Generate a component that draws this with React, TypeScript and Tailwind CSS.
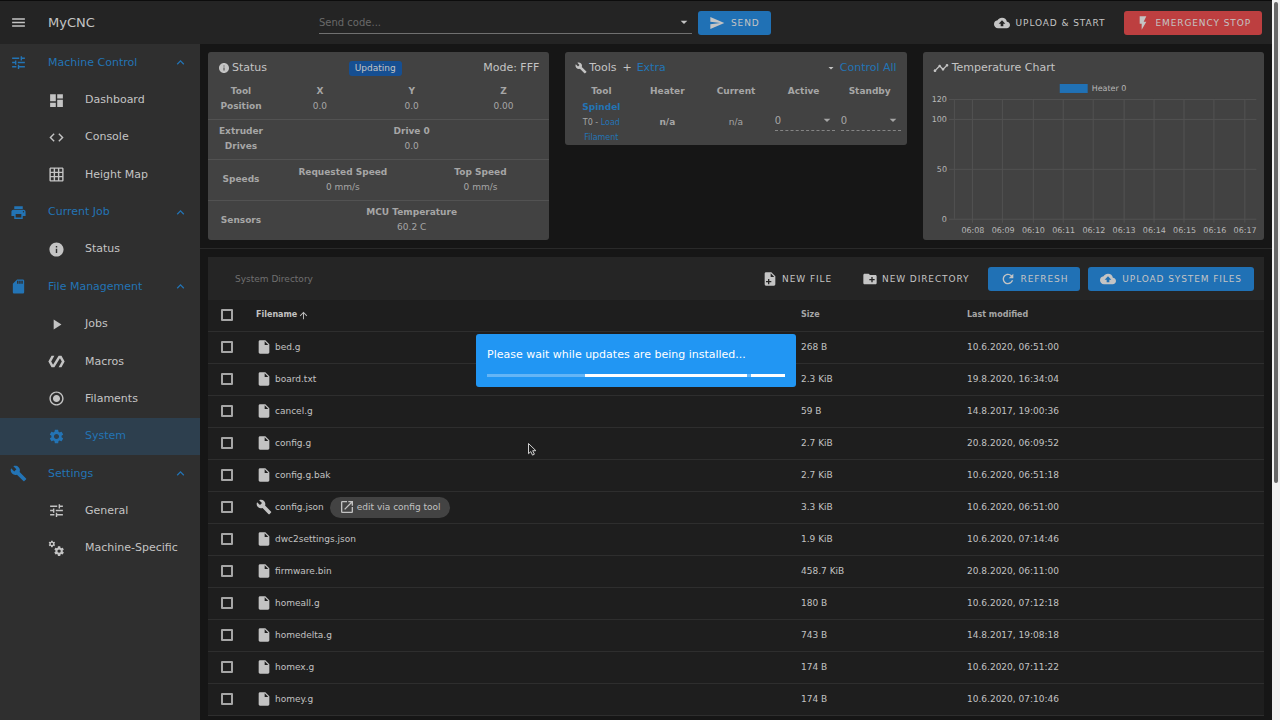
import type { ReactNode } from 'react';
import type { IconType } from 'react-icons';
import {
    MdArrowDropDown,
    MdArrowUpward,
    MdBuild,
    MdCloudUpload,
    MdCode,
    MdCreateNewFolder,
    MdDashboard,
    MdFlashOn,
    MdGridOn,
    MdInfo,
    MdInsertDriveFile,
    MdKeyboardArrowUp,
    MdMenu,
    MdOpenInNew,
    MdPlayArrow,
    MdPolymer,
    MdPrint,
    MdRadioButtonChecked,
    MdRefresh,
    MdSdStorage,
    MdSend,
    MdSettings,
    MdTimeline,
    MdTune,
} from 'react-icons/md';

const GEAR =
    'M12 15.5A3.5 3.5 0 0 1 8.5 12 3.5 3.5 0 0 1 12 8.5a3.5 3.5 0 0 1 3.5 3.5 3.5 3.5 0 0 1-3.5 3.5m7.43-2.53c.04-.32.07-.64.07-.97s-.03-.66-.07-1l2.11-1.63c.19-.15.24-.42.12-.64l-2-3.46c-.12-.22-.39-.31-.61-.22l-2.49 1c-.52-.39-1.06-.73-1.69-.98l-.37-2.65A.506.506 0 0 0 14 2h-4c-.25 0-.46.18-.5.42l-.37 2.65c-.63.25-1.17.59-1.69.98l-2.49-1c-.22-.09-.49 0-.61.22l-2 3.46c-.13.22-.07.49.12.64L4.57 11c-.04.34-.07.67-.07 1s.03.65.07.97l-2.11 1.66c-.19.15-.25.42-.12.64l2 3.46c.12.22.39.3.61.22l2.49-1.01c.52.4 1.06.74 1.69.99l.37 2.65c.04.24.25.42.5.42h4c.25 0 .46-.18.5-.42l.37-2.65c.63-.26 1.17-.59 1.69-.99l2.49 1.01c.22.08.49 0 .61-.22l2-3.46c.12-.22.07-.49-.12-.64z';

function Cogs({ size = 17 }: { size?: number | string }) {
    return (
        <svg width={size} height={size} viewBox="0 0 24 24" fill="currentColor">
            <path d={GEAR} transform="translate(0 0) scale(.46)" />
            <path d={GEAR} transform="translate(7.5 7.5) scale(.68)" />
        </svg>
    );
}

function FilePlus({ size = 17 }: { size?: number | string }) {
    return (
        <svg width={size} height={size} viewBox="0 0 24 24" fill="currentColor">
            <path d="M13 9h5.5L13 3.5V9M6 2h8l6 6v12a2 2 0 0 1-2 2H6a2 2 0 0 1-2-2V4c0-1.11.89-2 2-2m5 13v-3H9v3H6v2h3v3h2v-3h3v-2h-3z" />
        </svg>
    );
}

type NavEntry = { title: string; icon: IconType | typeof Cogs; group?: boolean; active?: boolean };

const navigation: NavEntry[] = [
    { title: 'Machine Control', icon: MdTune, group: true },
    { title: 'Dashboard', icon: MdDashboard },
    { title: 'Console', icon: MdCode },
    { title: 'Height Map', icon: MdGridOn },
    { title: 'Current Job', icon: MdPrint, group: true },
    { title: 'Status', icon: MdInfo },
    { title: 'File Management', icon: MdSdStorage, group: true },
    { title: 'Jobs', icon: MdPlayArrow },
    { title: 'Macros', icon: MdPolymer },
    { title: 'Filaments', icon: MdRadioButtonChecked },
    { title: 'System', icon: MdSettings, active: true },
    { title: 'Settings', icon: MdBuild, group: true },
    { title: 'General', icon: MdTune },
    { title: 'Machine-Specific', icon: Cogs },
];

const files = [
    { name: 'bed.g', size: '268 B', modified: '10.6.2020, 06:51:00' },
    { name: 'board.txt', size: '2.3 KiB', modified: '19.8.2020, 16:34:04' },
    { name: 'cancel.g', size: '59 B', modified: '14.8.2017, 19:00:36' },
    { name: 'config.g', size: '2.7 KiB', modified: '20.8.2020, 06:09:52' },
    { name: 'config.g.bak', size: '2.7 KiB', modified: '10.6.2020, 06:51:18' },
    { name: 'config.json', size: '3.3 KiB', modified: '10.6.2020, 06:51:00', configTool: true },
    { name: 'dwc2settings.json', size: '1.9 KiB', modified: '10.6.2020, 07:14:46' },
    { name: 'firmware.bin', size: '458.7 KiB', modified: '20.8.2020, 06:11:00' },
    { name: 'homeall.g', size: '180 B', modified: '10.6.2020, 07:12:18' },
    { name: 'homedelta.g', size: '743 B', modified: '14.8.2017, 19:08:18' },
    { name: 'homex.g', size: '174 B', modified: '10.6.2020, 07:11:22' },
    { name: 'homey.g', size: '174 B', modified: '10.6.2020, 07:10:46' },
];

const times = ['06:08', '06:09', '06:10', '06:11', '06:12', '06:13', '06:14', '06:15', '06:16', '06:17'];

function Sidebar() {
    return (
        <aside className="w-50 shrink-0 bg-[#2f2f2f]">
            <nav className="grid h-[523px] auto-rows-fr leading-[18px]">
                {navigation.map((item) => {
                    const Icon = item.icon;

                    if (item.group) {
                        return (
                            <button key={item.title} type="button" className="flex items-center pr-3 pl-[10px] text-[#2374b5]">
                                <Icon size={17} />
                                <span className="ml-[21px] flex-1 text-left">{item.title}</span>
                                <MdKeyboardArrowUp size={15} />
                            </button>
                        );
                    }

                    return (
                        <a key={item.title} href="#" className={`flex items-center pl-12 ${item.active ? 'bg-[#2d3f4e] text-[#2374b5]' : 'text-[#c4c4c4]'}`}>
                            <Icon size={17} />
                            <span className="ml-5">{item.title}</span>
                        </a>
                    );
                })}
            </nav>
        </aside>
    );
}

function Button({ children, className = '' }: { children: ReactNode; className?: string }) {
    return (
        <button type="button" className={`flex h-6 items-center rounded-[3px] text-[9px] leading-4 tracking-widest whitespace-nowrap uppercase ${className}`}>
            {children}
        </button>
    );
}

function Header() {
    return (
        <header className="flex h-11 shrink-0 items-center border-t border-[#0c0c0c] bg-[#242424] pr-[10px] text-[#c4c4c4]">
            <button type="button" aria-label="Menu" className="ml-[10px]">
                <MdMenu size={17} />
            </button>
            <h1 className="ml-[21px] w-[271px] text-[13px]">MyCNC</h1>
            <div className="flex h-[22px] w-[373px] items-center border-b border-[#707070]">
                <input type="text" aria-label="Send code" placeholder="Send code..." className="min-w-0 flex-1 text-[10px] outline-none placeholder:text-[#696969]" />
                <MdArrowDropDown size={16} />
            </div>
            <Button className="ml-[6px] gap-[6px] bg-[#2071b5] px-[11px]">
                <MdSend size={16} />
                Send
            </Button>
            <Button className="ml-auto gap-[6px] px-[11px]">
                <MdCloudUpload size={16} />
                Upload &amp; Start
            </Button>
            <Button className="ml-2 gap-1 bg-[#bd3f40] px-[11px]">
                <MdFlashOn size={16} />
                Emergency Stop
            </Button>
        </header>
    );
}

function Metric({ label, value }: { label: string; value: string }) {
    return (
        <div className="flex-1">
            <div className="font-bold">{label}</div>
            <div>{value}</div>
        </div>
    );
}

function StatusRow({ label, children }: { label: string; children: ReactNode }) {
    return (
        <div className="flex flex-1 items-center border-b border-[#525252] text-center leading-[15px] last:border-b-0">
            <div className="w-[66px] px-2 font-bold">{label}</div>
            <div className="flex flex-1">{children}</div>
        </div>
    );
}

function StatusCard() {
    return (
        <section className="flex h-[188px] flex-col rounded-[3px] bg-[#424242] text-[9px] text-[#a6a6a6]">
            <div className="flex h-[27px] items-center justify-between px-[10px] pt-[5px] text-[11px] text-[#c4c4c4]">
                <h2 className="flex items-center gap-[2px]">
                    <MdInfo size={12} />
                    Status
                </h2>
                <span className="rounded-[3px] bg-[#164f92] px-[6px] text-[9px] leading-[15px]">Updating</span>
                <span>Mode: FFF</span>
            </div>
            <StatusRow label="Tool Position">
                <Metric label="X" value="0.0" />
                <Metric label="Y" value="0.0" />
                <Metric label="Z" value="0.00" />
            </StatusRow>
            <StatusRow label="Extruder Drives">
                <Metric label="Drive 0" value="0.0" />
            </StatusRow>
            <StatusRow label="Speeds">
                <Metric label="Requested Speed" value="0 mm/s" />
                <Metric label="Top Speed" value="0 mm/s" />
            </StatusRow>
            <StatusRow label="Sensors">
                <Metric label="MCU Temperature" value="60.2 C" />
            </StatusRow>
        </section>
    );
}

function TemperatureInput({ label }: { label: string }) {
    return (
        <div className="mr-[6px] mb-1 flex h-[21px] items-center border-b border-dashed border-[#858585]">
            <input type="text" aria-label={label} defaultValue="0" className="w-0 min-w-0 flex-1 text-[10px] outline-none" />
            <MdArrowDropDown size={16} />
        </div>
    );
}

function ToolsCard() {
    return (
        <section className="h-[93px] rounded-[3px] bg-[#424242] text-[9px] text-[#a6a6a6]">
            <div className="flex h-8 items-center px-[10px] text-[11px] text-[#c4c4c4]">
                <MdBuild size={12} />
                <h2 className="ml-[2px]">Tools</h2>
                <span className="ml-[6px]">+</span>
                <a href="#" className="ml-[5px] text-[#2374b5]">
                    Extra
                </a>
                <MdArrowDropDown size={12} className="ml-auto" />
                <a href="#" className="ml-[3px] text-[#2374b5]">
                    Control All
                </a>
            </div>
            <table className="w-full table-fixed text-center">
                <thead>
                    <tr className="h-4">
                        <th className="w-[72px]">Tool</th>
                        <th className="w-[60px]">Heater</th>
                        <th>Current</th>
                        <th className="w-[66px] pr-2">Active</th>
                        <th className="w-[66px] pr-2">Standby</th>
                    </tr>
                </thead>
                <tbody>
                    <tr>
                        <td className="text-[8px] leading-[15px]">
                            <a href="#" className="block text-[9px] leading-[15px] font-bold text-[#2374b5]">
                                Spindel
                            </a>
                            T0 -{' '}
                            <a href="#" className="text-[#2374b5]">
                                Load
                                <br />
                                Filament
                            </a>
                        </td>
                        <th>n/a</th>
                        <td>n/a</td>
                        <td>
                            <TemperatureInput label="Active temperature" />
                        </td>
                        <td>
                            <TemperatureInput label="Standby temperature" />
                        </td>
                    </tr>
                </tbody>
            </table>
        </section>
    );
}

function ChartCard() {
    return (
        <section className="h-[188px] overflow-hidden rounded-[3px] bg-[#424242] text-[#c4c4c4]">
            <h2 className="flex h-[30px] items-center gap-[3px] px-[10px] pt-[2px]">
                <MdTimeline size={16} />
                Temperature Chart
            </h2>
            <svg viewBox="0 0 342 158" className="w-full font-[DejaVu_Sans,sans-serif]" fill="#b8b8b8" fontSize="8">
                <rect x="137" y="2" width="28" height="9" fill="#2071b5" />
                <text x="169" y="9">
                    Heater 0
                </text>
                {[
                    { label: '120', y: 17 },
                    { label: '100', y: 37 },
                    { label: '50', y: 87 },
                    { label: '0', y: 137 },
                ].map((tick) => (
                    <g key={tick.label}>
                        <path d={`M26 ${tick.y + 0.5}H334`} stroke="#525252" />
                        <text x="24" y={tick.y + 3} textAnchor="end">
                            {tick.label}
                        </text>
                    </g>
                ))}
                <path d="M31.500 17V137" stroke="#505050" />
                {times.map((time, i) => (
                    <g key={time}>
                        <path d={`M${Math.round(49 + i * 30.3) + 0.5} 17V141`} stroke="#525252" />
                        <text x={50 + i * 30.3} y="151" textAnchor="middle">
                            {time}
                        </text>
                    </g>
                ))}
            </svg>
        </section>
    );
}

function Checkbox({ label }: { label: string }) {
    return <input type="checkbox" aria-label={label} className="block size-3 appearance-none rounded-[1px] border-2 border-[#a6a6a6]" />;
}

function FileTable() {
    return (
        <section className="bg-[#1e1e1e]">
            <div className="flex h-[43px] items-center bg-[#252525] pr-[10px] pl-[27px] text-[#c4c4c4]">
                <span className="mr-auto text-[9px] leading-4 text-[#707070]">System Directory</span>
                <Button className="gap-1 px-[11px]">
                    <FilePlus size={16} />
                    New File
                </Button>
                <Button className="ml-2 gap-1 px-[11px]">
                    <MdCreateNewFolder size={16} />
                    New Directory
                </Button>
                <Button className="ml-2 gap-1 bg-[#2071b5] px-3">
                    <MdRefresh size={16} />
                    Refresh
                </Button>
                <Button className="ml-2 gap-[6px] bg-[#2071b5] px-3">
                    <MdCloudUpload size={16} />
                    Upload System Files
                </Button>
            </div>
            <table className="w-full table-fixed text-left text-[9px] leading-4 text-[#c2c2c2]">
                <thead>
                    <tr className="h-[31px] border-b border-[#2e2e2e] text-[8px] leading-4">
                        <th className="w-12 pl-[13px]">
                            <Checkbox label="Select all files" />
                        </th>
                        <th>
                            <button type="button" className="flex items-center gap-px">
                                Filename
                                <MdArrowUpward size={11} />
                            </button>
                        </th>
                        <th className="w-[166px] text-[#a6a6a6]">Size</th>
                        <th className="w-[297px] text-[#a6a6a6]">Last modified</th>
                    </tr>
                </thead>
                <tbody>
                    {files.map((file) => (
                        <tr key={file.name} className="h-8 border-b border-[#2e2e2e]">
                            <td className="pl-[13px]">
                                <Checkbox label={`Select ${file.name}`} />
                            </td>
                            <td>
                                <div className="flex items-center gap-[3px]">
                                    {file.configTool ? <MdBuild size={16} /> : <MdInsertDriveFile size={16} />}
                                    {file.name}
                                    {file.configTool && (
                                        <a href="#" className="ml-[3px] flex h-[21px] items-center gap-[2px] rounded-full bg-[#434343] px-[9px]">
                                            <MdOpenInNew size={16} />
                                            edit via config tool
                                        </a>
                                    )}
                                </div>
                            </td>
                            <td>{file.size}</td>
                            <td>{file.modified}</td>
                        </tr>
                    ))}
                </tbody>
            </table>
        </section>
    );
}

function UpdateDialog() {
    return (
        <div role="dialog" aria-label="Updating" className="absolute top-[334px] left-[476px] w-80 rounded-[3px] bg-[#2196f3] px-[11px] pt-3 pb-[10px] text-white">
            <p className="leading-[18px]">Please wait while updates are being installed...</p>
            <div className="mt-[10px] flex h-[3px] bg-[#64b5f6]">
                <div className="ml-[98px] flex-1 bg-white" />
                <div className="ml-1 w-[34px] bg-white" />
            </div>
        </div>
    );
}

export default function App() {
    return (
        <div className="relative flex h-screen overflow-hidden bg-[#161616] font-[DejaVu_Sans,sans-serif] text-[11px]">
            <div className="flex min-w-0 flex-1 flex-col">
                <Header />
                <div className="flex min-h-0 flex-1">
                    <Sidebar />
                    <main className="min-w-0 flex-1">
                        <div className="grid grid-cols-3 items-start gap-4 border-b border-[#2a2a2a] px-2 py-2">
                            <StatusCard />
                            <ToolsCard />
                            <ChartCard />
                        </div>
                        <div className="px-2 pt-2">
                            <FileTable />
                        </div>
                    </main>
                </div>
            </div>
            <div className="w-2 shrink-0 bg-[#f1f1f1] px-[2px] pt-[2px]">
                <div className="h-[481px] rounded-full bg-[#686868]" />
            </div>
            <UpdateDialog />
            <svg width="10" height="14" viewBox="0 0 10 14" className="absolute top-[442px] left-[527px]">
                <path d="M1.500 1.500v10.200l2.300-2.100 1.700 3.500 1.900-.9-1.700-3.500H8.900z" fill="#1e1e1e" stroke="#d0d0d0" />
            </svg>
        </div>
    );
}
